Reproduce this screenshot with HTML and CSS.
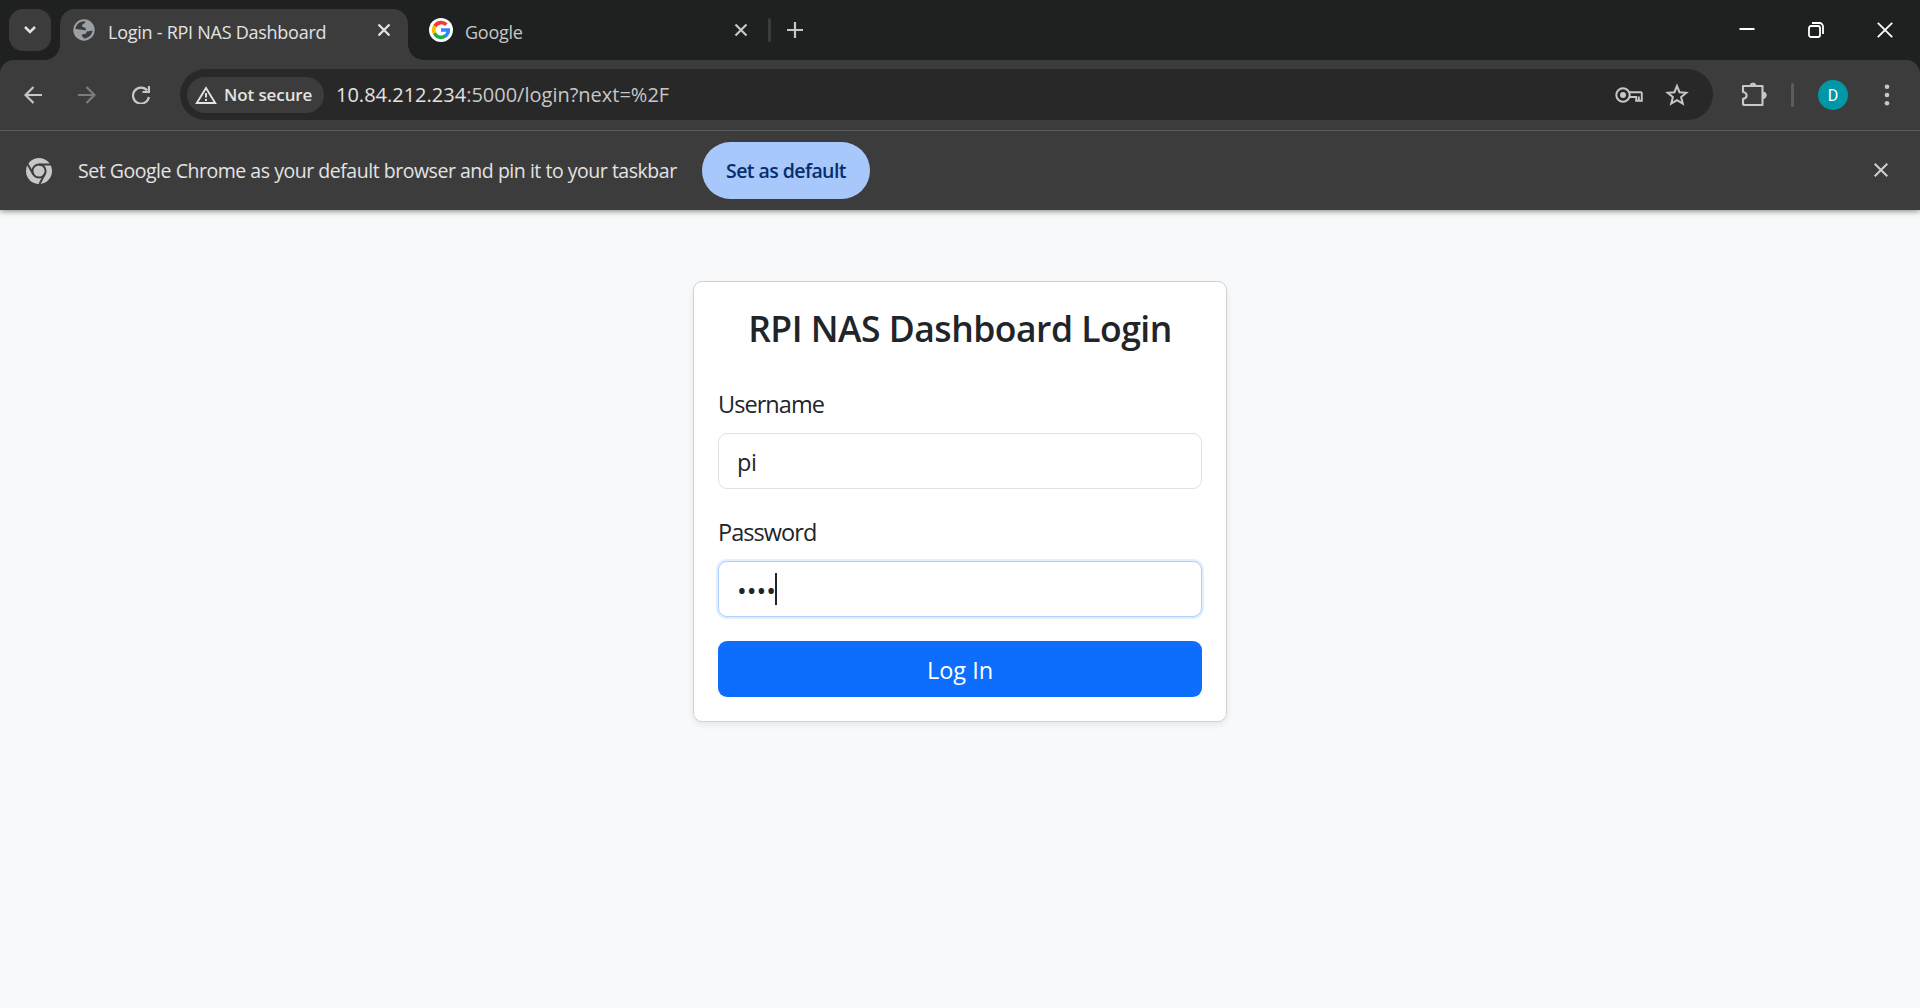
FILE: index.html
```html
<!DOCTYPE html>
<html lang="en">
<head>
<meta charset="utf-8">
<title>Login - RPI NAS Dashboard</title>
<link rel="stylesheet" href="styles.css">
</head>
<body>
<header class="browser">
  <div class="tabstrip">
    <button class="tab-search" aria-label="Search tabs">
      <svg width="14" height="10" viewBox="0 0 14 10"><path d="M2 2l5 5 5-5" fill="none" stroke="#e3e3e3" stroke-width="2.5"/></svg>
    </button>
    <div class="tab tab-active">
      <svg class="favicon" width="22" height="22" viewBox="0 0 22 22"><circle cx="11" cy="11" r="10.700" fill="#9aa0a6"/><path d="M2.500 10C3 5.500 7 2 12.400 2.400 12.700 4.600 8.800 4.800 8.900 6.900 9 8.600 12.600 7.600 13 10.200 13 12 10.500 11.200 9 10.800zM19.600 11.500C19 16 15.500 19.200 11 19.600 10.900 17.900 8.600 18 8.700 16.200 8.900 14.500 12.600 15.800 13.400 13.400 14 11.500 15.600 12.800 19.600 11.500z" fill="#3c3c3c"/></svg>
      <span class="tab-title title-login">Login - RPI NAS Dashboard</span>
      <svg class="tab-close" width="14" height="14" viewBox="0 0 14 14"><path d="M1.500 1.500l11 11m0-11l-11 11" stroke="#e3e3e3" stroke-width="2.300"/></svg>
    </div>
    <div class="tab tab-google">
      <svg class="favicon" width="24" height="24" viewBox="0 0 24 24"><circle cx="12" cy="12" r="12" fill="#fff"/><g fill="none" stroke-width="3.600"><path d="M17.300 6.700A7.300 7.300 0 0 0 5.700 8.400" stroke="#f33b35"/><path d="M5.900 8.100A7.300 7.300 0 0 0 5.700 15.700" stroke="#fdbd00"/><path d="M5.500 15.300A7.300 7.300 0 0 0 16.700 17.700" stroke="#22ad4b"/><path d="M16.200 18.100A7.300 7.300 0 0 0 19.300 12H12" stroke="#3186ff"/></g></svg>
      <span class="tab-title title-google">Google</span>
      <svg class="tab-close" width="14" height="14" viewBox="0 0 14 14"><path d="M1.500 1.500l11 11m0-11l-11 11" stroke="#c7c7c7" stroke-width="2.200"/></svg>
    </div>
    <span class="tab-divider"></span>
    <svg class="new-tab" width="16" height="16" viewBox="0 0 16 16"><path d="M8 0v16M0 8h16" stroke="#c7c7c7" stroke-width="2.200"/></svg>
    <div class="window-controls">
      <svg width="16" height="16" viewBox="0 0 16 16"><path d="M.5 7h15" stroke="#fff" stroke-width="2"/></svg>
      <svg width="16" height="16" viewBox="0 0 16 16"><rect x="1" y="4" width="11" height="11" rx="2" fill="none" stroke="#fff" stroke-width="1.800"/><path d="M4 1h7.500a3.500 3.500 0 0 1 3.500 3.500V12" fill="none" stroke="#fff" stroke-width="1.800"/></svg>
      <svg width="16" height="16" viewBox="0 0 16 16"><path d="M.8.800l14.400 14.400m0-14.400L.800 15.200" stroke="#fff" stroke-width="1.800"/></svg>
    </div>
  </div>
  <div class="toolbar">
    <nav class="nav-icons">
      <svg width="18" height="18" viewBox="0 0 18 18"><path d="M18 9H2M9.500 1L1.500 9l8 8" fill="none" stroke="#c7c7c7" stroke-width="2.200"/></svg>
      <svg width="18" height="18" viewBox="0 0 18 18"><path d="M0 9h16M8.500 1l8 8-8 8" fill="none" stroke="#7c7c7c" stroke-width="2.200"/></svg>
      <svg width="18" height="18" viewBox="0 0 18 18"><path d="M15.200 4.500A8 8 0 1 0 16.900 11M17 0v6h-6.500" fill="none" stroke="#c7c7c7" stroke-width="2.200"/></svg>
    </nav>
    <div class="omnibox">
      <div class="security-chip">
        <svg width="22" height="18" viewBox="0 0 22 18"><path d="M11 2L1.800 17h18.400z" fill="none" stroke="#e3e3e3" stroke-width="1.900"/><path d="M11 7v4.500M11 13v2" stroke="#e3e3e3" stroke-width="1.900"/></svg>
        <span class="chip-text">Not secure</span>
      </div>
      <span class="url">10.84.212.234<span class="url-rest">:5000/login?next=%2F</span></span>
      <div class="omnibox-icons">
        <svg width="28" height="18" viewBox="0 0 28 18"><circle cx="8" cy="9" r="6.700" fill="none" stroke="#c7c7c7" stroke-width="2"/><circle cx="8" cy="9" r="3" fill="#c7c7c7"/><path d="M14 6.200h11.800a1 1 0 0 1 1 1v7.600h-5.600V11H14M23.800 10.500V14" fill="none" stroke="#c7c7c7" stroke-width="1.900"/></svg>
        <svg width="24" height="24" viewBox="0 0 24 24"><path d="M12 3l2.500 6.200 6.800.5-5.200 4.300 1.700 6.700-5.800-3.600-5.800 3.600L7.900 14 2.700 9.700l6.800-.5z" fill="none" stroke="#c7c7c7" stroke-width="2"/></svg>
      </div>
    </div>
    <svg class="extensions" width="26" height="26" viewBox="0 0 26 26"><path d="M3.500 5h18v19h-18c-1 0-1.500-.5-1.500-1.500v-4.700c4.800-.6 4.800-6.200 0-6.800V5z" fill="none" stroke="#c7c7c7" stroke-width="2.100" stroke-linejoin="round"/><path d="M8.800 4.500a3.300 3.300 0 0 1 6.400 0zM22 11a3 3 0 0 1 0 6.500z" fill="#c7c7c7" stroke="#c7c7c7"/></svg>
    <span class="toolbar-divider"></span>
    <span class="avatar">D</span>
    <svg class="menu-dots" width="6" height="24" viewBox="0 0 6 24"><g fill="#c7c7c7"><circle cx="3" cy="3.700" r="2.300"/><circle cx="3" cy="12" r="2.300"/><circle cx="3" cy="20.300" r="2.300"/></g></svg>
  </div>
  <div class="infobar">
    <svg width="26" height="26" viewBox="0 0 26 26"><circle cx="13" cy="13" r="13" fill="#c7c7c7"/><circle cx="13" cy="13" r="6.600" fill="none" stroke="#3c3c3c" stroke-width="2"/><path d="M13 6.400h13M7.300 16.300L1 5M18.700 16.300L13.500 26" stroke="#3c3c3c" stroke-width="2"/></svg>
    <span class="infobar-text">Set Google Chrome as your default browser and pin it to your taskbar</span>
    <button class="default-button"><span>Set as default</span></button>
    <svg class="infobar-close" width="14" height="14" viewBox="0 0 14 14"><path d="M.7.700l12.600 12.600m0-12.600L.7 13.300" stroke="#d0d0d0" stroke-width="2"/></svg>
  </div>
</header>
<main class="page">
  <form class="card">
    <h1 class="card-title">RPI NAS Dashboard Login</h1>
    <label class="field-label label-user" for="username">Username</label>
    <input class="field" id="username" type="text" value="pi">
    <label class="field-label label-pass">Password</label>
    <div class="field field-focused"><span class="dots">••••</span><span class="caret"></span></div>
    <button class="login-button" type="button"><span>Log In</span></button>
  </form>
</main>
</body>
</html>
```
FILE: styles.css
```css
* { box-sizing: border-box; }
body {
  margin: 0;
  height: 1008px;
  display: flex;
  flex-direction: column;
  overflow: hidden;
  background: #f8f9fa;
  color: #212529;
  font-family: "Open Sans", "Noto Sans", sans-serif;
}
svg { display: block; flex: none; }
span { white-space: nowrap; }
button { border: 0; padding: 0; font-family: inherit; }

.browser { background: #1f2120; color: #e3e3e3; flex: none; box-shadow: 0 1px 6px rgba(0,0,0,.5); }
.tabstrip { display: flex; height: 60px; padding-left: 9px; align-items: flex-start; }
.tab-search {
  width: 42px; height: 42px; margin: 9px 9px 0 0;
  border-radius: 14px; background: #3c3c3c;
  display: flex; align-items: center; justify-content: center;
}
.tab { display: flex; align-items: center; height: 42px; margin-top: 9px; }
.tab-active {
  position: relative; width: 348px; height: 51px;
  padding: 0 17px 9px 13px;
  background: #3c3c3c; border-radius: 15px 15px 0 0;
}
.tab-active::before, .tab-active::after {
  content: ""; position: absolute; bottom: 0; width: 15px; height: 15px;
}
.tab-active::before { left: -15px; background: radial-gradient(circle at 0 0, transparent 14.5px, #3c3c3c 15px); }
.tab-active::after { right: -15px; background: radial-gradient(circle at 100% 0, transparent 14.5px, #3c3c3c 15px); }
.tab-title { font-size: 18px; line-height: 24px; padding-top: 3px; letter-spacing: -0.26px; }
.title-login { margin-left: 13px; }
.tab-close { margin-left: auto; }
.tab-google { width: 340px; padding-left: 21px; color: #c7c7c7; }
.title-google { margin-left: 12px; }
.tab-divider { width: 3px; height: 24px; margin: 18px 0 0 20px; border-radius: 2px; background: #3c3c3c; }
.new-tab { margin: 22px 0 0 16px; }
.window-controls { display: flex; gap: 53px; margin: 22px 27px 0 auto; }

.toolbar {
  display: flex; align-items: center; height: 71px; padding: 0 0 1px 24px;
  background: #3c3c3c; border-radius: 14px 14px 0 0; border-bottom: 1px solid #5c5c5c;
}
.nav-icons { display: flex; gap: 36px; width: 156px; padding-top: 1px; }
.omnibox {
  display: flex; align-items: center; width: 1533px; height: 51px;
  padding: 0 24px 0 7px; border-radius: 26px; background: #282828;
}
.security-chip {
  display: flex; align-items: center; width: 137px; height: 36px; padding-left: 8px;
  border-radius: 18px; background: #3c3c3c;
}
.chip-text { margin-left: 7px; font-size: 17px; font-weight: 600; line-height: 24px; letter-spacing: -0.1px; }
.url { margin-left: 12px; font-size: 20px; line-height: 26px; }
.url-rest { color: #c7c7c7; }
.omnibox-icons { display: flex; align-items: center; gap: 22px; margin-left: auto; }
.extensions { margin-left: 28px; margin-top: -2px; }
.toolbar-divider { width: 3px; height: 24px; margin-left: 24px; border-radius: 2px; background: #5c5c5c; }
.avatar {
  width: 30px; height: 30px; margin-left: 24px; border-radius: 50%;
  background: #0097a7; color: #fff; font: 16px/31px Roboto, sans-serif; text-align: center;
}
.menu-dots { margin-left: 36px; }

.infobar { display: flex; align-items: center; height: 79px; padding: 0 32px 0 26px; background: #3c3c3c; }
.infobar-text { width: 598px; margin-left: 26px; font-size: 19.500px; line-height: 28px; letter-spacing: -0.47px; }
.default-button {
  width: 168px; height: 57px; margin-left: 26px; border-radius: 29px;
  background: #a8c7fa; color: #062e6f; font-size: 19.500px; font-weight: 550; letter-spacing: -0.57px;
}
.infobar-close { margin: -1px 0 0 auto; }

.page { flex: 1; display: flex; justify-content: center; align-items: flex-start; padding-top: 71px; }
.card {
  display: flex; flex-direction: column; width: 534px; height: 441px; padding: 24px;
  background: #fff; border: 1px solid #d0d1d2; border-radius: 9px;
  box-shadow: 0 3px 6px rgba(0,0,0,.075);
}
.card-title {
  margin: 0; height: 44px; font-size: 35.500px; line-height: 45px; font-weight: 550;
  letter-spacing: -0.5px; text-align: center; white-space: nowrap;
}
.field-label { height: 36px; font-size: 23.500px; line-height: 37px; letter-spacing: -0.95px; }
.label-user { margin: 36px 0 11px; }
.label-pass { margin: 25px 0 11px; }
.field {
  width: 100%; height: 56px; padding: 2px 18px 0; border: 1px solid #dee2e6; border-radius: 9px;
  background: #fff; color: #212529; font-family: inherit; font-size: 23.500px; letter-spacing: -0.5px; outline: 0;
}
.field-focused { display: flex; align-items: center; padding: 0 18px; border-color: #b0cffb; box-shadow: 0 0 0 2px #e3eefe; }
.dots { width: 38px; padding-top: 1px; font-size: 26px; letter-spacing: 0; }
.caret { width: 2px; height: 32px; background: #212529; }
.login-button { height: 56px; padding-top: 1px; margin-top: 24px; border-radius: 9px; background: #0d6efd; color: #fff; font-size: 23.500px; }
```
